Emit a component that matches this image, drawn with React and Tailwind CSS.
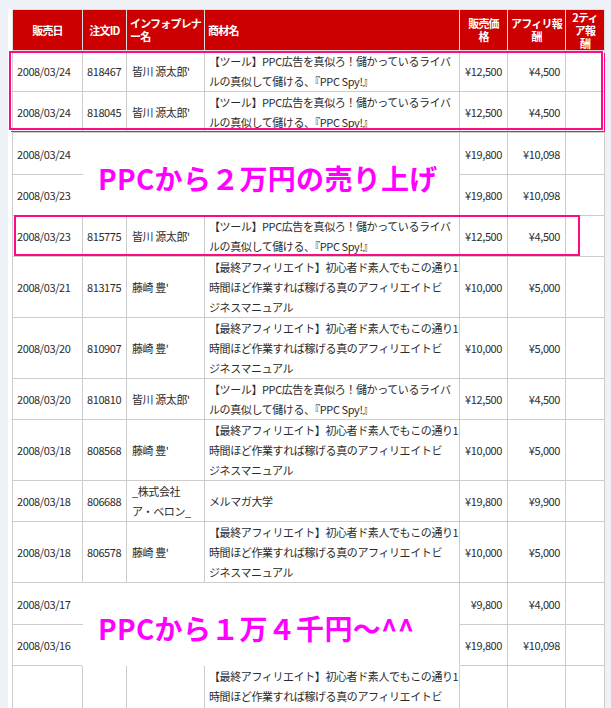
const tool = ["【ツール】PPC広告を真似ろ！儲かっているライバ", "ルの真似して儲ける、『PPC Spy!』"];
const saishu = [
  "【最終アフィリエイト】初心者ド素人でもこの通り1",
  "時間ほど作業すれば稼げる真のアフィリエイトビ",
  "ジネスマニュアル",
];

const minagawa = "皆川 源太郎'";
const fujisaki = "藤崎 豊'";

const td = "border border-[#cccccc] px-[4px] py-0 align-middle";

const Lines = ({ lines }) =>
  lines.map((l, i) => (
    <div key={i} className="whitespace-nowrap">
      {l}
    </div>
  ));

const Row = ({ d, id, name, p, price, aff }) => (
  <tr>
    <td className={td}>{d}</td>
    <td className={td}>{id}</td>
    <td className={td + " pl-[5px]"}>
      <Lines lines={name} />
    </td>
    <td className={td}>
      <Lines lines={p} />
    </td>
    <td className={td + " text-right pr-[5px]"}>{price}</td>
    <td className={td + " text-right pr-[5px]"}>{aff}</td>
    <td className={td}></td>
  </tr>
);

const Merged = ({ rows, text }) => (
  <>
    <tr className="h-[42px]">
      <td className={td + " border-r-white"}>{rows[0].d}</td>
      <td
        colSpan={3}
        rowSpan={2}
        className="border border-white border-l-white border-r-[#cccccc] bg-white pl-[15px] pt-[8px] align-middle"
      >
        <div className="whitespace-nowrap text-[28px] leading-none font-bold tracking-[0.3px] text-[#ff00ff]">
          {text}
        </div>
      </td>
      <td className={td + " text-right pr-[5px]"}>{rows[0].price}</td>
      <td className={td + " text-right pr-[5px]"}>{rows[0].aff}</td>
      <td className={td}></td>
    </tr>
    <tr className="h-[41px]">
      <td className={td + " border-r-white"}>{rows[1].d}</td>
      <td className={td + " text-right pr-[5px]"}>{rows[1].price}</td>
      <td className={td + " text-right pr-[5px]"}>{rows[1].aff}</td>
      <td className={td}></td>
    </tr>
  </>
);

const th =
  "border border-[#dddddd] bg-[#cc0000] text-white font-bold text-[11px] leading-[13px] tracking-[-0.8px] px-[3px] py-0 align-middle";

const H = ({ lines }) =>
  lines.map((l, i) => (
    <div key={i} className="whitespace-nowrap">
      {l}
    </div>
  ));

export default function App() {
  return (
    <div className="relative min-h-screen w-[611px] bg-[#eef1f5] pl-[8px] pt-[9px] font-['Noto_Sans_CJK_JP',sans-serif] text-[11px] leading-[20px] tracking-[-0.4px] text-[#2b2b2b]">
      <div className="w-[596px] bg-white pl-[4px]">
        <table className="w-[592px] table-fixed border-collapse">
          <colgroup>
            <col className="w-[70px]" />
            <col className="w-[44px]" />
            <col className="w-[78px]" />
            <col className="w-[255px]" />
            <col className="w-[48px]" />
            <col className="w-[58px]" />
            <col className="w-[39px]" />
          </colgroup>
          <thead>
            <tr className="h-[41px]">
              <th className={th + " text-center"}>販売日</th>
              <th className={th + " text-center"}>注文ID</th>
              <th className={th + " text-left"}>
                <H lines={["インフォプレナ", "ー名"]} />
              </th>
              <th className={th + " text-left"}>商材名</th>
              <th className={th + " text-center"}>
                <H lines={["販売価", "格"]} />
              </th>
              <th className={th + " text-center"}>
                <H lines={["アフィリ報", "酬"]} />
              </th>
              <th className={th + " text-center"}>
                <H lines={["2ティ", "ア報", "酬"]} />
              </th>
            </tr>
          </thead>
          <tbody>
            <Row d="2008/03/24" id="818467" name={[minagawa]} p={tool} price="¥12,500" aff="¥4,500" />
            <Row d="2008/03/24" id="818045" name={[minagawa]} p={tool} price="¥12,500" aff="¥4,500" />
            <Merged
              text="PPCから２万円の売り上げ"
              rows={[
                { d: "2008/03/24", price: "¥19,800", aff: "¥10,098" },
                { d: "2008/03/23", price: "¥19,800", aff: "¥10,098" },
              ]}
            />
            <Row d="2008/03/23" id="815775" name={[minagawa]} p={tool} price="¥12,500" aff="¥4,500" />
            <Row d="2008/03/21" id="813175" name={[fujisaki]} p={saishu} price="¥10,000" aff="¥5,000" />
            <Row d="2008/03/20" id="810907" name={[fujisaki]} p={saishu} price="¥10,000" aff="¥5,000" />
            <Row d="2008/03/20" id="810810" name={[minagawa]} p={tool} price="¥12,500" aff="¥4,500" />
            <Row d="2008/03/18" id="808568" name={[fujisaki]} p={saishu} price="¥10,000" aff="¥5,000" />
            <Row
              d="2008/03/18"
              id="806688"
              name={["_株式会社", "ア・ベロン_"]}
              p={["メルマガ大学"]}
              price="¥19,800"
              aff="¥9,900"
            />
            <Row d="2008/03/18" id="806578" name={[fujisaki]} p={saishu} price="¥10,000" aff="¥5,000" />
            <Merged
              text="PPCから１万４千円～^^"
              rows={[
                { d: "2008/03/17", price: "¥9,800", aff: "¥4,000" },
                { d: "2008/03/16", price: "¥19,800", aff: "¥10,098" },
              ]}
            />
            <Row d="" id="" name={[""]} p={saishu} price="" aff="" />
          </tbody>
        </table>
      </div>

      {/* highlight boxes drawn over the table */}
      <div className="absolute left-[9px] top-[51px] h-[79px] w-[594px] border-2 border-[#ff0a84]" />
      <div className="absolute left-[11px] top-[53px] h-[79px] w-[594px] border border-[#ff0a84] border-l-0 border-t-0" />
      <div className="absolute left-[14px] top-[215px] h-[41px] w-[566px] border-2 border-[#ff0a84]" />
    </div>
  );
}
